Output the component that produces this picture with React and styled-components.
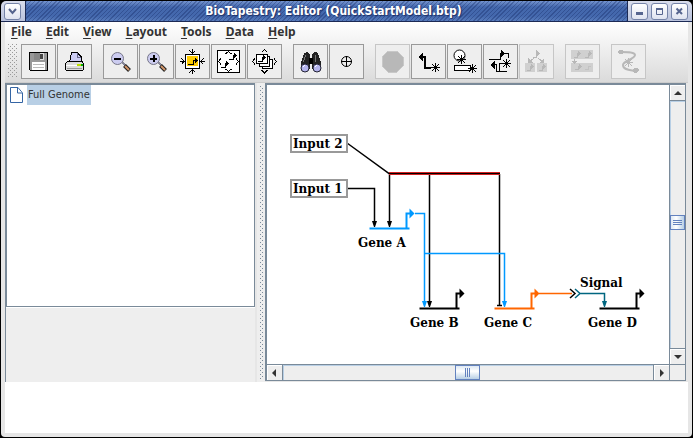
import React from 'react'
import styled, { createGlobalStyle } from 'styled-components'

const steel = '#7a8a99'
const ink = '#333'

const GlobalStyle = createGlobalStyle`
  * { box-sizing: border-box; }
  body { margin: 0; background: #000; }
  button { padding: 0; margin: 0; border: 0; font: inherit; color: inherit; }
`

const Frame = styled.div`
  display: flex;
  flex-direction: column;
  min-height: 100vh;
  padding: 1px;
  background: #000;
  color: ${ink};
  font-family: 'Noto Sans', 'Open Sans', sans-serif;
`

const TitleBar = styled.header`
  display: flex;
  height: 21px;
  border-radius: 5px 5px 0 0;
  overflow: hidden;
  border-bottom: 1px solid #1c2a55;
`

const Title = styled.h1`
  flex: 1;
  margin: 0;
  padding-left: 14px;
  border: solid #1c2a55;
  border-width: 0 1px;
  text-align: center;
  color: #fff;
  font: bold 12px/21px 'DejaVu Sans Condensed', 'DejaVu Sans', sans-serif;
  text-shadow: 1px 1px 1px #1c2f66;
  background:
    repeating-linear-gradient(135deg, rgba(20, 40, 100, 0.35) 0 1px, transparent 1px 3px),
    linear-gradient(#7595cf, #4468ad 30%, #4468ad 75%, #587cbc);
`

const TitleControls = styled.div`
  display: flex;
  align-items: center;
  gap: 3px;
  padding: 0 4px 0 3px;
  background: linear-gradient(#d9ddec, #b9c2dc);
`

const TitleButton = styled.button`
  display: flex;
  width: 17px;
  height: 17px;
  border: 1px solid #7583a8;
  border-radius: 3px;
  background: linear-gradient(#fff, #dfe3f0);
`

const Body = styled.div`
  flex: 1;
  display: flex;
  flex-direction: column;
  padding: 0 4px 4px;
  background: #e6e6e6;
  border-radius: 0 0 4px 4px;
`

const Bars = styled.div`
  background: linear-gradient(#fff, #dadada);
`

const MenuBar = styled.nav`
  display: flex;
  gap: 14px;
  height: 20px;
  padding-left: 6px;
`

const MenuItem = styled.button`
  background: none;
  font: bold 12px/20px 'Noto Sans', sans-serif;

  u { text-underline-offset: 2px; }
`

const ToolBar = styled.div`
  display: flex;
  gap: 1px;
  height: 41px;
  padding: 2px 0 4px 3px;
  border-bottom: 1px solid #ccc;
`

// one-pixel dots staggered on a 4px tile
const Grip = styled.div`
  flex: 1;
  background-image:
    conic-gradient(from 270deg at 1px 1px, ${p => p.$dot} 90deg, transparent 0),
    conic-gradient(from 270deg at 1px 1px, ${p => p.$dot} 90deg, transparent 0);
  background-size: 4px 4px;
  background-position: 0 0, 2px 2px;
`

const Handle = styled.div`
  display: flex;
  width: 10px;
  margin-right: 2px;
`

const ToolButton = styled.button`
  display: flex;
  align-items: center;
  justify-content: center;
  flex: none;
  width: 35px;
  height: 35px;
  border: 1px solid #999;
  background: #eee;
  color: #000;

  &:disabled {
    border-color: #c6c6c6;
    color: #b8b8b8;
  }
`

const Gap = styled.span`
  width: 9px;
`

const Split = styled.main`
  flex: 1;
  display: flex;
`

const Side = styled.aside`
  display: flex;
  flex-direction: column;
  width: 36.6%;
  border-left: 1px solid ${steel};
  background: #eee;
`

const Tree = styled.ul`
  flex: 3;
  margin: 0;
  padding: 0 3px;
  list-style: none;
  background: #fff;
  border: solid ${steel};
  border-width: 2px 1px 1px;
`

const Remainder = styled.div`
  flex: 1;
  border-top: 1px solid #fff;
`

const TreeItem = styled.li`
  display: flex;
  align-items: center;
  gap: 4px;
`

const TreeLabel = styled.span`
  padding: 0 1px;
  background: #b8cfe5;
  font: 11px/20px 'DejaVu Sans Condensed', 'DejaVu Sans', sans-serif;
`

const Divider = styled.div`
  display: flex;
  width: 8px;
  margin-left: 2px;
  padding: 3px 1px 3px 3px;
  background: #eee;
`

const ScrollPane = styled.section`
  flex: 1;
  display: grid;
  grid-template: 1fr 16px / 1fr 16px;
  border: solid ${steel};
  border-width: 2px 1px 1px 2px;
  margin: 0 2px 1px 0;
  background: #fff;
`

const Viewport = styled.div`
  overflow: hidden;
  min-width: 0;
`

const ScrollBar = styled.div`
  display: flex;
  flex-direction: ${p => (p.$vertical ? 'column' : 'row')};
  border: solid ${steel};
  border-width: ${p => (p.$vertical ? '0 0 0 1px' : '1px 0 0')};
  background: #eee;
`

const ScrollArrow = styled.button`
  display: flex;
  align-items: center;
  justify-content: center;
  flex: none;
  width: 15px;
  height: 15px;
  background: #eee;
  box-shadow: inset 1px 1px #fff;
`

const Track = styled.div`
  display: flex;
  flex: 1;
  flex-direction: inherit;
  border: solid ${steel};
  border-width: ${p => (p.$vertical ? '1px 0' : '0 1px')};
  box-shadow: inset 1px 1px #b8cfe5;
`

const Space = styled.span`
  flex: ${p => p.$share};
`

const Thumb = styled.div`
  display: flex;
  align-items: center;
  justify-content: center;
  width: ${p => (p.$vertical ? '100%' : '25px')};
  height: ${p => (p.$vertical ? '15px' : '100%')};
  border: 1px solid #6382bf;
  background: linear-gradient(${p => (p.$vertical ? '90deg' : '180deg')}, #dde8f3, #fff 40%, #b8cfe5);
`

const Corner = styled.div`
  border: solid ${steel};
  border-width: 1px 0 0 1px;
  background: #eee;
`

const Status = styled.footer`
  height: 51px;
  background: #fff;
`

const Art = ({ children, size = 24 }) => (
  <svg width={size} height={size} viewBox={`0 0 ${size} ${size}`} fill="none" stroke="currentColor" shapeRendering="crispEdges">
    {children}
  </svg>
)

const Star = ({ x, y }) => (
  <path
    transform={`translate(${x} ${y})`}
    shapeRendering="auto"
    d="M-4.5 0H4.5M0-4.5V4.5M-3.5-3.5L3.5 3.5M3.5-3.5L-3.5 3.5"
  />
)

const Save = () => (
  <Art>
    <path d="M2.500 2.500H20.500V20.500H3.500L2.500 19.500Z" fill="#999" stroke="#000" />
    <path d="M7 3H17V10H7Z" fill="#ddd" stroke="none" />
    <path d="M7 3H13V10H7Z" fill="#888" stroke="none" />
    <path d="M13 4H16V9H13Z" fill="#444" stroke="none" />
    <path d="M5 12H18V20H5Z" fill="#fff" stroke="none" />
    <path d="M6 14.500H17M6 17.500H17" stroke="#bbb" />
  </Art>
)

const Print = () => (
  <Art>
    <path d="M6.500 12.500L8.500 2.500H14L18.500 7V12.500Z" fill="#ccccf4" stroke="#000" />
    <path d="M14.500 3V7.500H18" stroke="#668" />
    <path d="M3.500 12.500L5 11.500H19L20.500 13.500V19.500L19.500 20.500H3.500L2.500 19.500V13.500Z" fill="#ddd" stroke="#000" />
    <path d="M3 15.500H16" stroke="#fff" />
    <path d="M14 14.500H18" stroke="#bd0" strokeWidth="2" />
    <path d="M18 14.500H20" stroke="#0a0" strokeWidth="2" />
    <path d="M4 18.500H19" stroke="#999" />
  </Art>
)

const Magnifier = ({ plus }) => (
  <Art>
    <path d="M13 12L17 16" stroke="#889" strokeWidth="2" />
    <path d="M15.500 15.500L20.500 20.500" stroke="#222" strokeWidth="4" shapeRendering="auto" />
    <path d="M16 16L20 20" stroke="#d09468" strokeWidth="2" shapeRendering="auto" />
    <circle cx="8.500" cy="8.500" r="6" fill="#ccccf0" stroke="#777788" shapeRendering="auto" />
    <path d="M5 8.500H12" stroke="#000" strokeWidth="2" />
    {plus && <path d="M8.500 5V12" stroke="#000" strokeWidth="2" />}
  </Art>
)

const ZoomModel = () => (
  <Art size={25}>
    <path d="M5.500 5.500H19.500V19.500H5.500Z" fill="#fff" stroke="#000" strokeWidth="1" />
    <path d="M7 7H18V17H7Z" fill="#fc0" stroke="none" />
    <path d="M8 15.500H13.500V11.500H16" />
    <path d="M15 9L18 11.500L15 14Z" fill="#000" stroke="none" />
    <path d="M12.500 0V4M12.500 25V21M0 12.500H4M25 12.500H21" />
    <path d="M9.500 1.500L12.500 4L15.500 1.500M9.500 23.500L12.500 21L15.500 23.500M1.500 9.500L4 12.500L1.500 15.500M23.500 9.500L21 12.500L23.500 15.500" />
  </Art>
)

const ZoomAll = () => (
  <Art size={25}>
    <path d="M1.500 1.500H23.500V23.500H1.500Z" fill="#fff" stroke="#000" />
    <path d="M5 18.500H9.500V14.500H11M13 10.500H17.500V6.500H19" />
    <path d="M10 12L13 14.500L10 17ZM18 4L21 6.500L18 9Z" fill="#000" stroke="none" />
    <path d="M9.500 5L12.500 2.500L15.500 5M9.500 20L12.500 22.500L15.500 20M5 9.500L2.500 12.500L5 15.500M20 9.500L22.500 12.500L20 15.500" />
  </Art>
)

const ZoomStack = () => (
  <Art size={25}>
    <path d="M10.500 10.500H20.500V19.500H10.500Z" fill="#fff" />
    <path d="M7.500 7.500H17.500V17.500H7.500Z" fill="#fff" />
    <path d="M4.500 5.500H15.500V14.500H4.500Z" fill="#fff" />
    <path d="M6 12.500H10.500V8.500H12" />
    <path d="M11 6L14 8.500L11 11Z" fill="#000" stroke="none" />
    <path d="M9.500 3.500L12.500 0.500L15.500 3.500M9.500 21L12.500 24L15.500 21M3 9.500L0.500 12.500L3 15.500M22 9.500L24.500 12.500L22 15.500" />
  </Art>
)

const Binoculars = () => (
  <Art>
    <path d="M5 3L8 2L11 4V19H2V13ZM19 3L16 2L13 4V19H22V13Z" fill="#222" stroke="none" />
    <path d="M10 8H14V14H10Z" fill="#000" stroke="none" />
    <path d="M6.500 5L4.500 12M16.500 5V12" stroke="#777" />
    <circle cx="6" cy="18" r="4" fill="#b4b4ec" stroke="#223" shapeRendering="auto" />
    <circle cx="18" cy="18" r="4" fill="#b4b4ec" stroke="#223" shapeRendering="auto" />
    <path d="M4 17L6 15M16 17L18 15" stroke="#fff" />
  </Art>
)

const Crosshair = () => (
  <Art size={13}>
    <circle cx="6.500" cy="6.500" r="5" shapeRendering="auto" />
    <path d="M1 6.500H12M6.500 1V12" />
  </Art>
)

const Stop = () => (
  <Art>
    <path d="M7 1H16L22 7V16L16 22H7L1 16V7Z" fill="#b8b8b8" stroke="#c8c8c8" />
  </Art>
)

const AddGene = () => (
  <Art size={25}>
    <path d="M6 8H9V19H15" strokeWidth="2" />
    <path d="M2 8L7 3V13Z" fill="#000" stroke="none" />
    <Star x={19.5} y={18.500} />
  </Art>
)

const AddNode = () => (
  <Art size={25}>
    <circle cx="7.500" cy="6.500" r="5.500" fill="#fff" shapeRendering="auto" />
    <path d="M2.500 16.500H18.500V21.500H2.500Z" fill="#fff" />
    <Star x={9.500} y={10.500} />
    <Star x={20.500} y={19.500} />
  </Art>
)

const AddLink = () => (
  <Art size={25}>
    <path d="M1 10.500H12.500V4.500H14M16 4.500H20.500V9M6 15.500H8.500V22M11.500 14V22M8 22.500H19M11 14.500H15" />
    <path d="M13 1L17 4.500L13 8ZM2 16L7 12V20Z" fill="#000" stroke="none" />
    <Star x={18.500} y={14.500} />
  </Art>
)

const Propagate = () => (
  <Art size={25}>
    <path d="M1 14H11V23H1ZM13 14H23V23H13Z" fill="#d0d0d0" stroke="none" />
    <path d="M9 8.500H12.500V4.500H14M10 9L5 13M14 9L19 13M3 21.500H6.500V17.500H8M15 21.500H18.500V17.500H20" />
    <path d="M12 1L16 4.500L12 8ZM4 9V14H9ZM20 9V14H15ZM7 15L10 17.500L7 20ZM19 15L22 17.500L19 20Z" fill="currentColor" stroke="none" />
  </Art>
)

const SubModel = () => (
  <Art size={25}>
    <path d="M1 1H23V10H1ZM1 14H23V23H1Z" fill="#d0d0d0" stroke="none" />
    <path d="M4 8.500H7.500V4.500H9M15 8.500H18.500V4.500H20M5 20.500H8.500V17.500H10M4.500 10V13" />
    <path d="M8 2L11 4.500L8 7ZM19 2L22 4.500L19 7ZM9 15L12 17.500L9 20ZM1 12H8L4.500 15Z" fill="currentColor" stroke="none" />
    <path d="M15 20.500H18.500V17.500H21" stroke="#c2c2c2" />
  </Art>
)

const DrawLink = () => (
  <Art size={25}>
    <path d="M5 3C12 3 19 3 19 6C19 10 7 12 7 16C7 21 14 21 19 22" strokeWidth="2" shapeRendering="auto" />
    <path d="M3 1H6L8 3L6 5H3L2 3ZM18 19H21L23 21L21 24H18L16 22Z" fill="currentColor" stroke="none" />
    <Star x={12.500} y={13.500} />
  </Art>
)

const tools = [
  ['Save', Save],
  ['Print', Print],
  null,
  ['Zoom out', Magnifier],
  ['Zoom in', () => <Magnifier plus />],
  ['Zoom to model', ZoomModel],
  ['Zoom to all', ZoomAll],
  ['Zoom to all models', ZoomStack],
  null,
  ['Find', Binoculars],
  ['Center', Crosshair],
  null,
  ['Cancel', Stop, true],
  ['Add gene', AddGene],
  ['Add node', AddNode],
  ['Add link', AddLink],
  ['Propagate', Propagate, true],
  null,
  ['Add submodel', SubModel, true],
  null,
  ['Draw link', DrawLink, true],
]

const Canvas = styled.svg`
  display: block;

  text {
    fill: #000;
    font: bold 12px 'DejaVu Serif', serif;
  }
`

const Gene = ({ x, y, color, label, labelX }) => (
  <g>
    <path d={`M${x} ${y}h40M${x + 37} ${y}v-15h4`} stroke={color} strokeWidth="2" fill="none" />
    <path d={`M${x + 40} ${y - 20}l5 5l-5 5z`} fill={color} />
    <text x={labelX} y={y + 18}>{label}</text>
  </g>
)

const Input = ({ y, label }) => (
  <g>
    <rect x="24" y={y} width="56" height="17" fill="#fff" stroke="#999" strokeWidth="2" />
    <text x="26" y={y + 13}>{label}</text>
  </g>
)

const Arrow = ({ x, y, color = '#000' }) => (
  <path d={`M${x - 2.5} ${y - 6}h5l-2 6h-1z`} fill={color} />
)

const Network = () => (
  <Canvas width="400" height="278" role="img" aria-label="Gene network">
    <g fill="none" stroke="#000" strokeWidth="1.500">
      <path d="M80 58L122.500 89V138M80 103.500H107.500V138M162.500 89V218M232.500 89V220M230 220.500H235" />
      <path d="M122 88.500H233" stroke="#d02020" strokeWidth="3" />
      <path d="M122 88.500H233" strokeWidth="1" />
      <path d="M148 128.500H157.500V218M157.500 168.500H237.500V218" stroke="#0099ff" />
      <path d="M272 208.500H305" stroke="#ff6600" />
      <path d="M303 204L308 208.500L303 213" />
      <path d="M308 204L313 208.500L308 213M313 208.500H337.500V218" stroke="#006680" />
    </g>
    <Arrow x={107.500} y={142} />
    <Arrow x={122.500} y={142} />
    <Arrow x={162.500} y={222} />
    <Arrow x={157.500} y={222} color="#0099ff" />
    <Arrow x={237.500} y={222} color="#0099ff" />
    <Arrow x={337.500} y={222} color="#006680" />
    <Input y={50} label="Input 2" />
    <Input y={95} label="Input 1" />
    <Gene x={102.500} y={143.500} color="#0099ff" label="Gene A" labelX={91} />
    <Gene x={152.500} y={223.500} color="#000" label="Gene B" labelX={143} />
    <Gene x={227.500} y={223.500} color="#ff6600" label="Gene C" labelX={217} />
    <Gene x={332.500} y={223.500} color="#000" label="Gene D" labelX={321} />
    <text x="313" y="202">Signal</text>
  </Canvas>
)

const arrows = {
  up: 'M4 0L8 4H0Z',
  down: 'M0 0H8L4 4Z',
  left: 'M4 0V8L0 4Z',
  right: 'M0 0L4 4L0 8Z',
}

const ArrowButton = ({ dir }) => {
  const tall = dir === 'left' || dir === 'right'
  return (
    <ScrollArrow aria-label={`Scroll ${dir}`}>
      <svg width={tall ? 4 : 8} height={tall ? 8 : 4}>
        <path d={arrows[dir]} fill={ink} />
      </svg>
    </ScrollArrow>
  )
}

const Scroller = ({ vertical, from, to, before, after }) => (
  <ScrollBar $vertical={vertical}>
    <ArrowButton dir={from} />
    <Track $vertical={vertical}>
      <Space $share={before} />
      <Thumb $vertical={vertical}>
        <svg width="9" height="9" stroke="#6382bf" shapeRendering="crispEdges">
          <path d={vertical ? 'M0 2.500H9M0 4.500H9M0 6.500H9' : 'M2.500 0V9M4.500 0V9M6.500 0V9'} />
        </svg>
      </Thumb>
      <Space $share={after} />
    </Track>
    <ArrowButton dir={to} />
  </ScrollBar>
)

const TitleIcon = ({ d, label, thick = 2 }) => (
  <TitleButton aria-label={label}>
    <svg width="15" height="15" fill="none" stroke="#56658f" strokeWidth={thick}>
      <path d={d} />
    </svg>
  </TitleButton>
)

const App = () => (
  <Frame>
    <GlobalStyle />
    <TitleBar>
      <TitleControls>
        <TitleIcon label="Window menu" d="M4 5L7.500 9L11 5" />
      </TitleControls>
      <Title>BioTapestry: Editor (QuickStartModel.btp)</Title>
      <TitleControls>
        <TitleIcon label="Minimize" thick={3} d="M4 9.500H11" />
        <TitleIcon label="Maximize" thick={1} d="M4.500 4V10.500H10.500V4M4 4.500H11M4 5.500H11" />
        <TitleIcon label="Close" d="M4.500 4.500L10 10M10 4.500L4.500 10" />
      </TitleControls>
    </TitleBar>
    <Body>
      <Bars>
        <MenuBar>
          {['File', 'Edit', 'View', 'Layout', 'Tools', 'Data', 'Help'].map(name => (
            <MenuItem key={name}>
              <u>{name[0]}</u>{name.slice(1)}
            </MenuItem>
          ))}
        </MenuBar>
        <ToolBar>
          <Handle>
            <Grip $dot="#999" />
          </Handle>
          {tools.map((tool, i) => {
            if (!tool) return <Gap key={i} />
            const [name, Icon, disabled] = tool
            return (
              <ToolButton key={name} aria-label={name} disabled={disabled}>
                <Icon />
              </ToolButton>
            )
          })}
        </ToolBar>
      </Bars>
      <Split>
        <Side>
          <Tree>
            <TreeItem>
              <svg width="13" height="17" fill="#fff" stroke="#3465a4">
                <path d="M0.500 0.500H8L12.500 6V15.500H0.500Z" />
                <path d="M7.500 1V6H12" />
              </svg>
              <TreeLabel>Full Genome</TreeLabel>
            </TreeItem>
          </Tree>
          <Remainder />
        </Side>
        <Divider>
          <Grip $dot={steel} />
        </Divider>
        <ScrollPane>
          <Viewport>
            <Network />
          </Viewport>
          <Scroller vertical from="up" to="down" before={115} after={119} />
          <Scroller from="left" to="right" before={173} after={173} />
          <Corner />
        </ScrollPane>
      </Split>
      <Status />
    </Body>
  </Frame>
)

export default App
